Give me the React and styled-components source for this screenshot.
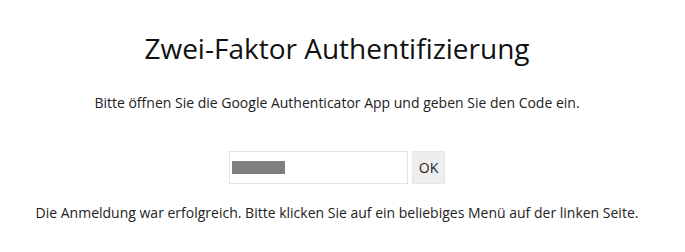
import React from 'react';
import styled, { createGlobalStyle } from 'styled-components';

const GlobalStyle = createGlobalStyle`
    body {
        margin: 0;
        background: #ffffff;
        font-family: 'Open Sans', sans-serif;
        color: #222;
    }
`

const Page = styled.div`
    display: flex;
    flex-direction: column;
    align-items: center;
    text-align: center;
    padding-top: 28px;
    padding-right: 11px;
`

const Title = styled.h1`
    margin: 0;
    font-size: 28px;
    font-weight: 400;
    line-height: 40px;
    color: #111;
`

const Hint = styled.p`
    margin: 0;
    margin-top: ${props => props.top}px;
    font-size: 14px;
    line-height: 20px;
    color: #222;
`

const Form = styled.form`
    display: flex;
    flex-direction: row;
    gap: 4px;
    margin-top: 38px;
`

const CodeInput = styled.div`
    width: 175px;
    height: 31px;
    border: 1px solid #e3e3e3;
    background: #fff;
    display: flex;
    align-items: center;
    padding-left: 2px;
`

const Masked = styled.span`
    display: block;
    width: 53px;
    height: 13px;
    background: #808080;
`

const Button = styled.button`
    width: 33px;
    height: 33px;
    border: 1px solid #e6e6e6;
    background: #eeeeee;
    font-family: 'Open Sans', sans-serif;
    font-size: 14px;
    color: #222;
    padding: 0;
    cursor: pointer;
`

function App() {
    return (
        <Page>
            <GlobalStyle />
            <Title>Zwei-Faktor Authentifizierung</Title>
            <Hint top={25}>Bitte öffnen Sie die Google Authenticator App und geben Sie den Code ein.</Hint>
            <Form onSubmit={e => e.preventDefault()}>
                <CodeInput><Masked /></CodeInput>
                <Button type="submit">OK</Button>
            </Form>
            <Hint top={19}>Die Anmeldung war erfolgreich. Bitte klicken Sie auf ein beliebiges Menü auf der linken Seite.</Hint>
        </Page>
    );
}

export default App;
